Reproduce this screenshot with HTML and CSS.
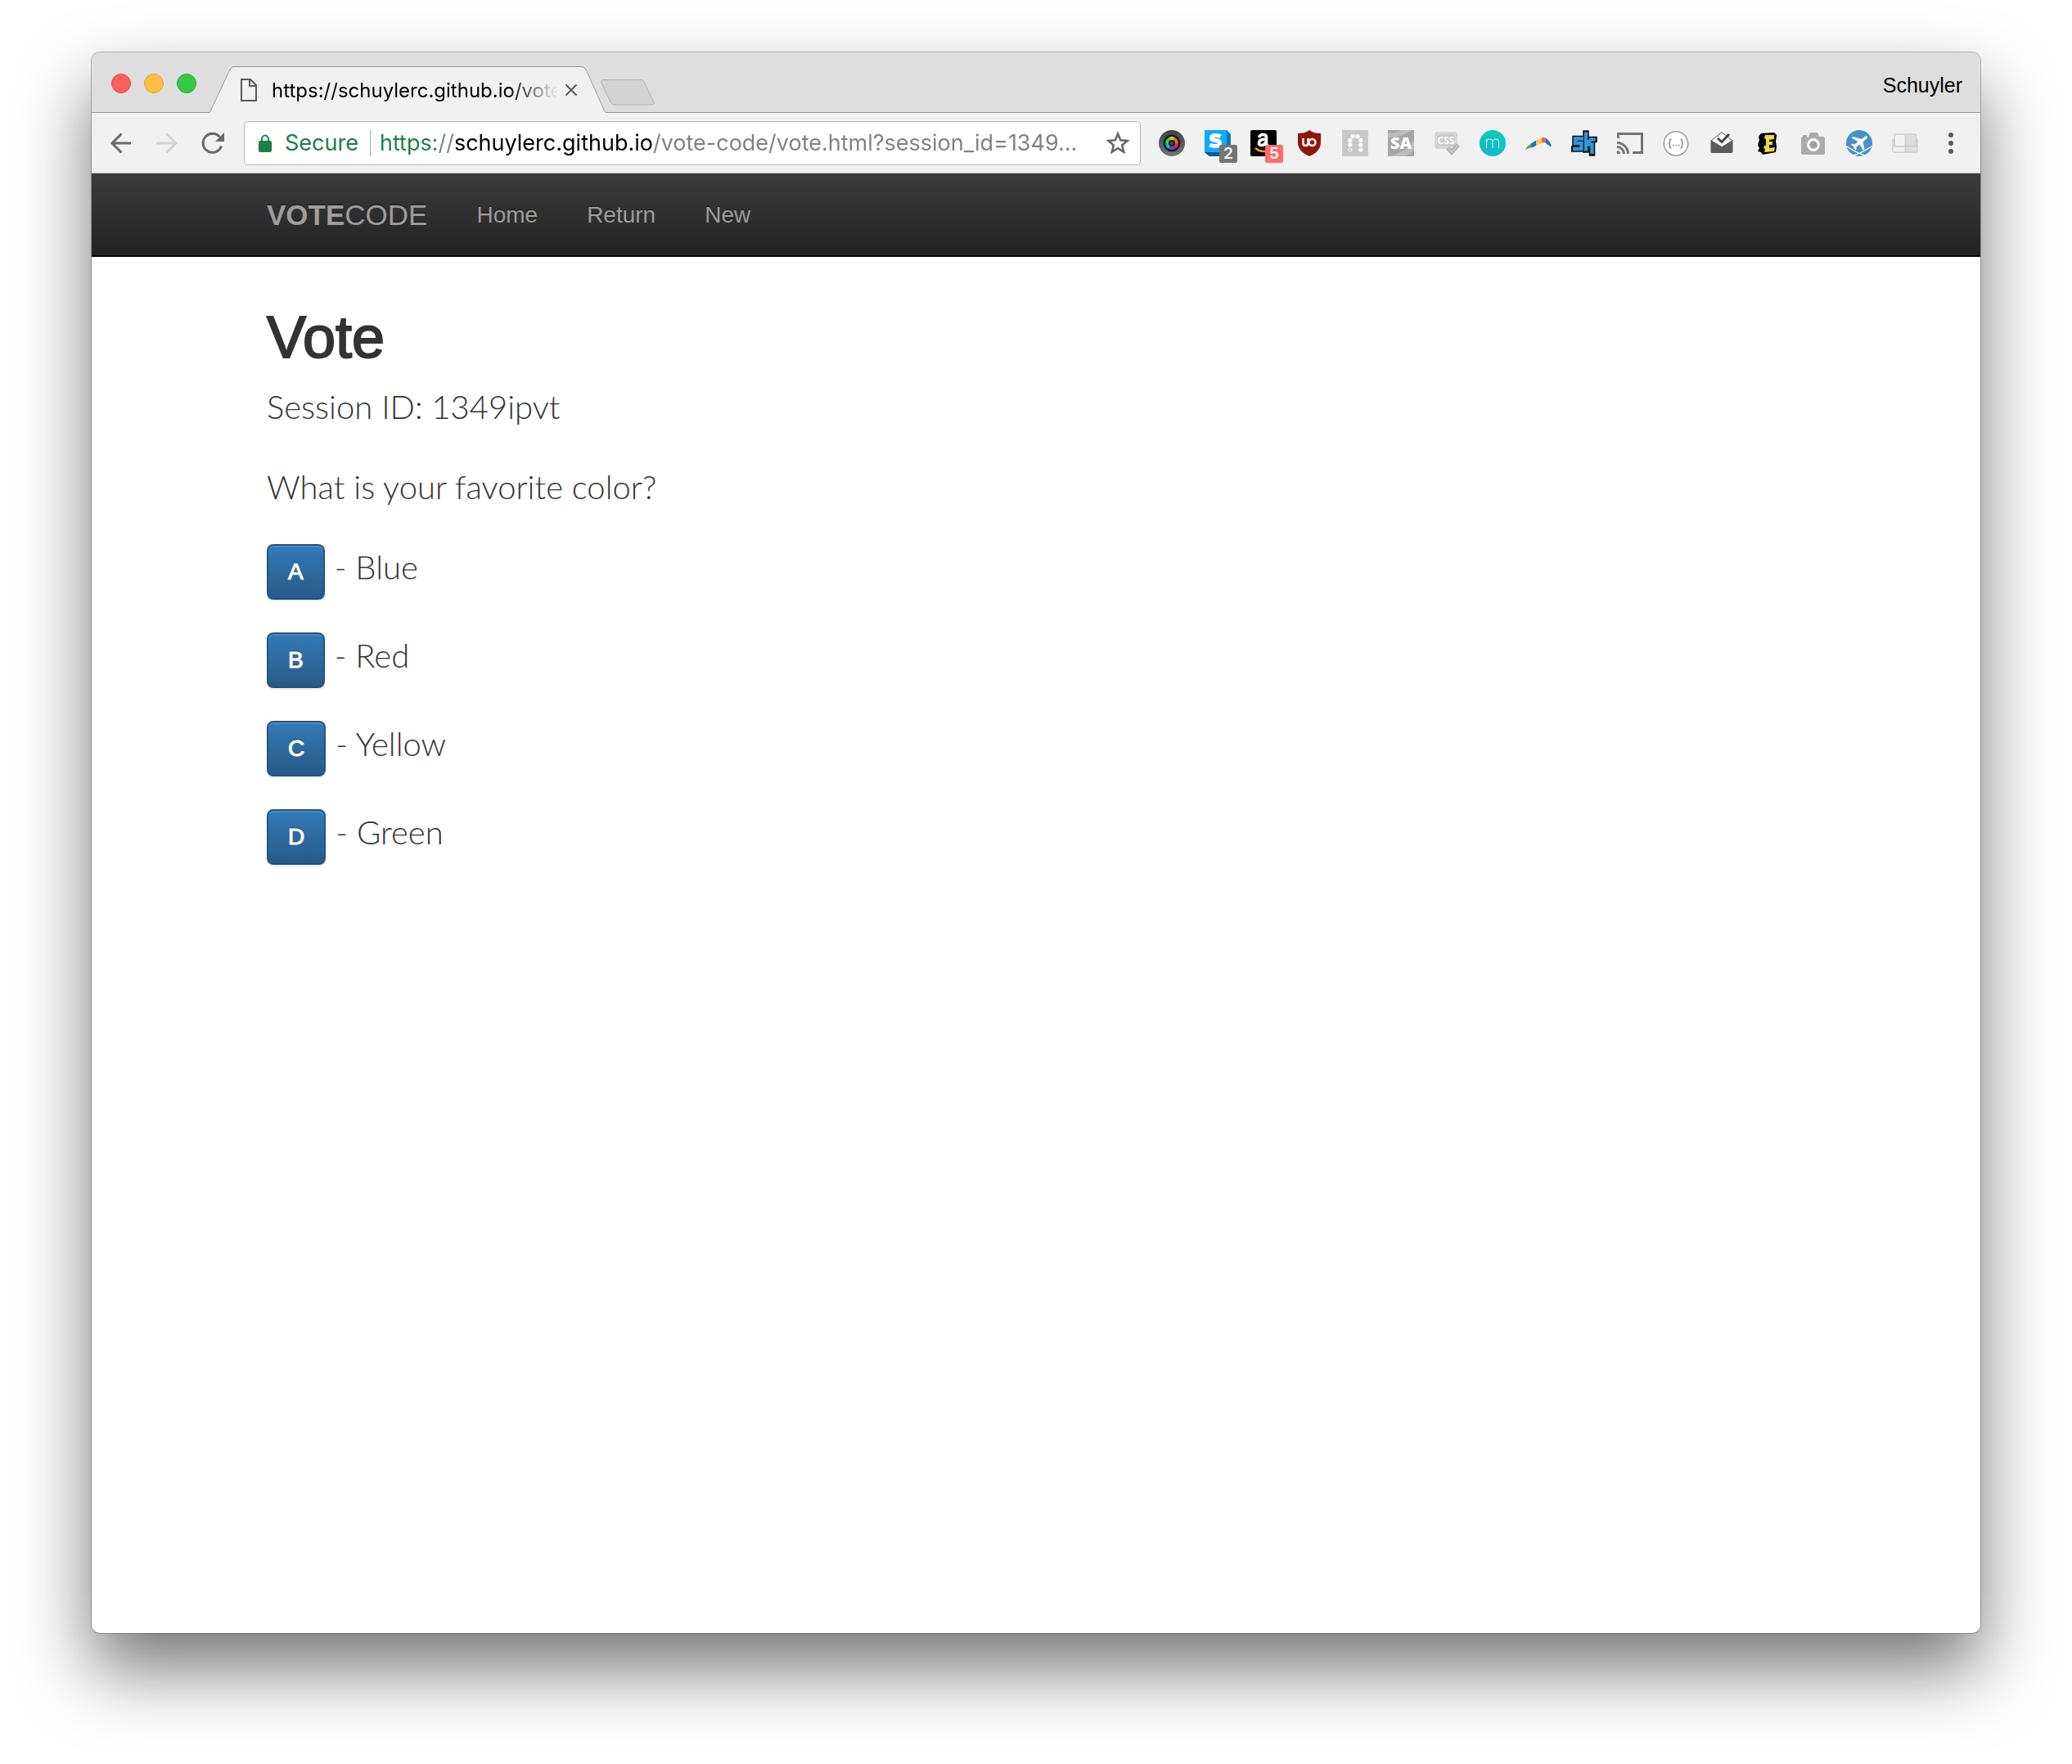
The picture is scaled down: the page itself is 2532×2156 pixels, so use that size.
FILE: index.html
```html
<!DOCTYPE html>
<html lang="en">
<head>
<meta charset="utf-8">
<title>Vote</title>
<link rel="stylesheet" href="styles.css">
</head>
<body>
<div class="window">
  <header class="tabstrip">
    <div class="lights">
      <button class="light light-close" aria-label="Close window"></button>
      <button class="light light-min" aria-label="Minimize window"></button>
      <button class="light light-max" aria-label="Zoom window"></button>
    </div>
    <div class="tab">
      <svg class="tab-shape" viewBox="0 0 484 57" aria-hidden="true"><path d="M0 56 Q1 56 2 53 L25 4 Q27 .5 30 .5 H455 Q458 .5 460 4 L482 53 Q483 56 484 56 V57 H0 Z" fill="#f1f1f1"/><path d="M0 56 Q1 56 2 53 L25 4 Q27 .5 30 .5 H455 Q458 .5 460 4 L482 53 Q483 56 484 56" fill="none" stroke="#999"/></svg>
      <svg class="tab-page" viewBox="0 0 20 28" aria-hidden="true"><path d="M1 1 H12 L19 8 V27 H1 Z M11 1 V9 H19" fill="none" stroke="#5a5a5a" stroke-width="2"/></svg>
      <span class="tab-title">https://schuylerc.github.io/vote</span>
      <button class="tab-close" aria-label="Close tab"><svg viewBox="0 0 16 16"><path d="M1.500 1.500 L14.500 14.500 M14.500 1.500 L1.500 14.500" stroke="#5a5a5a" stroke-width="2"/></svg></button>
    </div>
    <button class="new-tab" aria-label="New tab"><svg viewBox="0 0 66 32"><path d="M4 .5 H49 Q52 .5 53 3 L65 28 Q66 31 63 31 H18 Q14 31 12 28 L1 4 Q0 .5 4 .5 Z" fill="#d3d3d3" stroke="#b0b0b0"/></svg></button>
    <span class="profile">Schuyler</span>
  </header>

  <div class="toolbar">
    <div class="tools">
      <button class="tool" aria-label="Back"><svg viewBox="0 0 32 32"><path d="M28 16 H5 M16.500 4.500 L5 16 L16.500 27.500" fill="none" stroke="#686868" stroke-width="3"/></svg></button>
      <button class="tool" aria-label="Forward"><svg viewBox="0 0 32 32"><path d="M3 16 H27 M15.500 4.500 L27 16 L15.500 27.500" fill="none" stroke="#d3d3d3" stroke-width="3"/></svg></button>
      <button class="tool" aria-label="Reload"><svg viewBox="0 0 32 32"><path d="M26.500 19.500 A11.500 11.500 0 1 1 24.500 8.500" fill="none" stroke="#686868" stroke-width="3"/><path d="M30 3 V14 H19 Z" fill="#686868"/></svg></button>
    </div>
    <div class="omnibox">
      <svg class="lock" viewBox="0 0 16 22" aria-hidden="true"><path d="M4 9 V6 A4 4.500 0 0 1 12 6 V9" fill="none" stroke="#188048" stroke-width="2"/><rect y="8" width="16" height="14" rx="2" fill="#188048"/></svg>
      <label class="secure" for="url">Secure</label>
      <input class="url" id="url" type="text" value="https://schuylerc.github.io/vote-code/vote.html?session_id=1349...">
      <button class="star" aria-label="Bookmark this page"><svg viewBox="0 0 30 30"><path d="M15 3.500 L18.200 11.300 L26.600 12 L20.200 17.400 L22.200 25.700 L15 21.200 L7.800 25.700 L9.800 17.400 L3.400 12 L11.800 11.300 Z" fill="none" stroke="#686868" stroke-width="2.600"/></svg></button>
    </div>
    <div class="tools">
      <button class="tool" aria-label="Color lens"><svg viewBox="0 0 32 32"><defs><linearGradient id="rim" x2="0" y2="1"><stop stop-color="#3f4246"/><stop offset="1" stop-color="#70757b"/></linearGradient></defs><circle cx="16" cy="16" r="16" fill="url(#rim)"/><circle cx="16" cy="16" r="10.500" fill="#1b1c1e"/><g fill="none" stroke-width="4.500"><path d="M10.500 16 A5.500 5.500 0 0 1 13.200 11.200" stroke="#35d43b"/><path d="M13.200 11.200 A5.500 5.500 0 0 1 18.800 11.200" stroke="#b9cf35"/><path d="M18.800 11.200 A5.500 5.500 0 0 1 21.500 16" stroke="#ee6a24"/><path d="M21.500 16 A5.500 5.500 0 0 1 18.800 20.800" stroke="#e8207c"/><path d="M18.800 20.800 A5.500 5.500 0 0 1 13.200 20.800" stroke="#5d45d8"/><path d="M13.200 20.800 A5.500 5.500 0 0 1 10.500 16" stroke="#18b9cc"/></g><circle cx="16" cy="16" r="4" fill="#2a2022"/><circle cx="16" cy="16" r="1.500" fill="#5b5558"/></svg></button>
      <button class="tool" aria-label="Similar sites"><svg viewBox="0 0 32 32"><path d="M27 0 L32 5 V32 H6 L0 27 Z" fill="#0879b5"/><path d="M0 27 H27 V32 H6 Z" fill="#075b8c"/><path d="M0 0 H27 V27 H0 Z" fill="#10a9ff"/><path d="M19.500 8 Q17 6.500 13.500 6.500 Q8.500 6.500 8.500 9.500 Q8.500 12 13 12.500 Q18.500 13 18.500 16 Q18.500 19.500 13 19.500 Q9.500 19.500 6.500 18" fill="none" stroke="#fff" stroke-width="5"/></svg><span class="badge">2</span></button>
      <button class="tool" aria-label="Shopping assistant"><svg viewBox="0 0 32 32"><rect width="32" height="32" rx="2"/><path d="M10.500 9 Q11.500 5.500 15.500 5.500 Q19.500 5.500 19.500 9 V16 Q19.500 18 21.500 19.500 M19.500 11 Q10.500 11 10.500 15.500 Q10.500 18.500 13.500 18.500 Q18 18.500 19 14" fill="none" stroke="#fff" stroke-width="3.600"/><path d="M6 22 Q13 28 22 25" fill="none" stroke="#f79b1e" stroke-width="2.500"/></svg><span class="badge badge-red">5</span></button>
      <button class="tool" aria-label="Content blocker"><svg viewBox="0 0 32 32"><path d="M16 0 C20 3 25 4 30 4 V15 C30 24 23 29 16 32 C9 29 2 24 2 15 V4 C7 4 12 3 16 0 Z" fill="#92150d"/><path d="M8.500 10 V16 Q8.500 19 11.500 19 Q14.500 19 14.500 16 V10" fill="none" stroke="#fff" stroke-width="2.500"/><circle cx="19.500" cy="15" r="4" fill="none" stroke="#fff" stroke-width="2.500"/></svg></button>
      <button class="tool" aria-label="Dots"><svg viewBox="0 0 32 32"><rect width="32" height="32" fill="#c8c8c8"/><g fill="#fff"><circle cx="13" cy="7.500" r="2.600"/><circle cx="19" cy="7.500" r="2.600"/><circle cx="9.800" cy="12.500" r="2.600"/><circle cx="22.800" cy="12.500" r="2.600"/><circle cx="9.800" cy="18" r="2.600"/><circle cx="22.800" cy="18" r="2.600"/><circle cx="22.800" cy="24" r="2.600"/></g><circle cx="9.800" cy="24" r="2" fill="none" stroke="#fff"/></svg></button>
      <button class="tool" aria-label="SA"><svg viewBox="0 0 32 32"><rect width="32" height="32" fill="#a6a6a6"/><path d="M0 9 Q16 9 30 0 H16 Q8 4 0 4 Z M0 32 Q22 28 32 12 V24 L22 32 Z" fill="#bbb"/><text x="16" y="23" class="glyph heavy" font-size="20" fill="#fff">SA</text></svg></button>
      <button class="tool" aria-label="CSS check"><svg viewBox="0 0 32 32"><rect x="2" y="3" width="26" height="19" rx="2" fill="#ccc" stroke="#bdbdbd"/><rect x="3" y="4" width="24" height="17" rx="1" fill="none" stroke="#e6e6e6"/><text x="15" y="17" class="glyph bold" font-size="12" fill="#fff">CSS</text><path d="M17 22 L22 27 L30 18" fill="none" stroke="#aaa" stroke-width="5"/><path d="M17 22 L22 27 L30 18" fill="none" stroke="#c6c6c6" stroke-width="2.500"/></svg></button>
      <button class="tool" aria-label="Momentum"><svg viewBox="0 0 32 32"><defs><linearGradient id="mint" x1=".8" y1="0" x2=".2" y2="1"><stop stop-color="#0bcdb0"/><stop offset="1" stop-color="#12b7d3"/></linearGradient></defs><circle cx="16" cy="16" r="16" fill="url(#mint)"/><path d="M8.500 22 V11 M8.500 15 Q8.500 11 12 11 Q16 11 16 15 V22 M16 15 Q16 11 20 11 Q23.500 11 23.500 15 V22" fill="none" stroke="#c9f5ef" stroke-width="1.200"/></svg></button>
      <button class="tool" aria-label="Boomerang"><svg viewBox="0 0 32 32"><path d="M0 24 Q2 19 8 16 L9 21 Q4 22 0 24 Z" fill="#4fa86a"/><path d="M7 16.500 L13 12.500 L13 19 L8 21.500 Z" fill="#1573ab"/><path d="M13 12.500 L20 9.500 L20 15.500 L13 19 Z" fill="#fdc65c"/><path d="M20 9.500 Q23 8.500 25 10 L26 16 Q23 15 20 15.500 Z" fill="#e9674f"/><path d="M25 10 Q30 13 32 20 Q29 20 25 15.500 Z" fill="#1573ab"/></svg></button>
      <button class="tool" aria-label="SK"><svg viewBox="0 0 32 32"><g fill="none"><path id="sk" d="M14 10.500 H5 V16 H12.500 V23 H3 M18 4 V24 M28 11.500 H23.500 L20 16 M20 17 H25.500 V28" stroke="#111" stroke-width="7.500" stroke-linecap="square"/><path d="M15 10.500 H5 V16 H12.500 V23 H2 M18 2.500 V25.500 M29.500 11.500 H24 L20 16 M19 17.500 H25.500 V29" stroke="#3295d9" stroke-width="4.400"/></g></svg></button>
      <button class="tool" aria-label="Cast"><svg viewBox="0 0 32 32"><g fill="none" stroke="#747474" stroke-width="3"><path d="M1.500 10 V4.500 H30.500 V27.500 H19"/><path d="M0 15.500 A13.500 13.500 0 0 1 13.500 29"/><path d="M0 20.500 A8.500 8.500 0 0 1 8.500 29"/></g><path d="M0 25 A4 4 0 0 1 4 29 H0 Z" fill="#747474"/></svg></button>
      <button class="tool" aria-label="JSON viewer"><svg viewBox="0 0 32 32"><circle cx="16" cy="16.500" r="14.700" fill="#fff" stroke="#a0a0a0" stroke-width="1.500"/><path d="M10.500 11 Q8.500 11 8.500 13 V15 Q8.500 16.500 7 16.500 Q8.500 16.500 8.500 18 V20 Q8.500 22 10.500 22 M21.500 11 Q23.500 11 23.500 13 V15 Q23.500 16.500 25 16.500 Q23.500 16.500 23.500 18 V20 Q23.500 22 21.500 22" fill="none" stroke="#888" stroke-width="1.500"/><path d="M12 18.500 h1.500 m2 0 h1.500 m2 0 h1.500" stroke="#888" stroke-width="1.500"/></svg></button>
      <button class="tool" aria-label="Save to inbox"><svg viewBox="0 0 32 32"><path d="M3 13 L16 2.500 L29 13 L16 21 Z" fill="#f8f8f8" stroke="#555"/><path d="M2.500 12 L16 20.500 L29.500 12 V26 Q29.500 28 27.500 28 H4.500 Q2.500 28 2.500 26 Z" fill="#5b5b5b"/><path d="M11 10 L16 14.500 L25 5" fill="none" stroke="#444" stroke-width="2.800"/></svg></button>
      <button class="tool" aria-label="E reader"><svg viewBox="0 0 32 32"><path d="M8 4 L24 3 L27 6 L26 14 L27 20 L26 27 L10 30 L8 27 L4 26 L6 22 L4 18 L6 12 L5 8 Z"/><path d="M13 6 L24 6 L24 11 L18 12 V14 L22 14 V18 L18 18 V22 L25 21 L24 26 L12 27 L13 23 L11 22 L12 19 H14 V11 L12 10 Z" fill="#f8d648"/></svg></button>
      <button class="tool" aria-label="Screenshot"><svg viewBox="0 0 32 32"><path d="M3 8 V6 H8 V9 H10 L12 3 H21 L23 8 H28 Q30 8 30 10 V28 Q30 30 28 30 H3 Q1 30 1 28 V10 Q1 8 3 8 Z" fill="#ababab"/><circle cx="16" cy="18" r="6.500" fill="#ababab" stroke="#fff" stroke-width="2.800"/><circle cx="16" cy="18" r="3" fill="#999"/></svg></button>
      <button class="tool" aria-label="Flights"><svg viewBox="0 0 32 32"><circle cx="16" cy="16" r="16" fill="#4692c8"/><path d="M24.500 7 Q27 7 25.500 10 L20.500 14.500 L22.500 23.500 L20.500 24.500 L16.500 17.500 L12.500 20.500 L12.500 23.500 L11 24.500 L9.500 20.500 L6 18 L7.500 16.500 L10.500 17.500 L14.500 14 L6.500 9.500 L8.500 8 L18.500 11 Z" fill="#fff"/><path d="M1 20 Q13 28 23 31 M31 20 Q19 28 9 31" fill="none" stroke="#fff" stroke-width="1.500"/></svg></button>
      <button class="tool" aria-label="Sofa"><svg viewBox="0 0 32 32"><g stroke="#ccc" stroke-width="1.300"><rect x="3" y="5" width="13.500" height="15" rx="2" fill="#f3f3f3"/><rect x="16.500" y="5" width="13" height="15" rx="2" fill="#dcdcdc"/><path d="M1 12 H3 V20 H16.500 V27 H3 Q1 27 1 25 Z" fill="#f1f1f1"/><path d="M31 12 H29.500 V20 H16.500 V27 H29 Q31 27 31 25 Z" fill="#dfdfdf"/></g></svg></button>
      <button class="tool" aria-label="Menu"><svg viewBox="0 0 32 32"><g fill="#5a5a5a"><circle cx="16" cy="6" r="3"/><circle cx="16" cy="16" r="3"/><circle cx="16" cy="26" r="3"/></g></svg></button>
    </div>
  </div>

  <nav class="navbar">
    <div class="container navbar-inner">
      <a class="brand" href="#"><b>VOTE</b>CODE</a>
      <a class="nav-link" href="#">Home</a>
      <a class="nav-link" href="#">Return</a>
      <a class="nav-link" href="#">New</a>
    </div>
  </nav>

  <main class="container page">
    <h1 class="title">Vote</h1>
    <p class="lead">Session ID: 1349ipvt</p>
    <p class="lead">What is your favorite color?</p>
    <div class="option"><button class="btn" id="a">A</button><label class="answer" for="a">- Blue</label></div>
    <div class="option"><button class="btn" id="b">B</button><label class="answer" for="b">- Red</label></div>
    <div class="option"><button class="btn" id="c">C</button><label class="answer" for="c">- Yellow</label></div>
    <div class="option"><button class="btn" id="d">D</button><label class="answer" for="d">- Green</label></div>
  </main>
</div>
</body>
</html>
```
FILE: styles.css
```css
* { box-sizing: border-box; }

body {
  display: flex;
  min-height: 100vh;
  margin: 0;
  padding: 64px 112px 160px;
  background: #fff;
  color: #333;
  font-family: "Liberation Sans", Arial, sans-serif;
}

button {
  padding: 0;
  border: 0;
  background: none;
  font: inherit;
}

svg { display: block; width: 100%; height: 100%; }

.window {
  flex: 1;
  min-width: 0;
  border-radius: 10px;
  background: #fff;
  box-shadow: 0 0 0 1px rgba(0, 0, 0, .25), 0 44px 88px rgba(0, 0, 0, .54);
}

/* Tab strip */
.tabstrip {
  display: flex;
  align-items: flex-end;
  height: 74px;
  padding: 2px 22px 0 24px;
  border-bottom: 1px solid #999;
  border-radius: 10px 10px 0 0;
  background: #dedede;
}
.lights { display: flex; gap: 16px; align-self: center; margin-right: 16px; }
.light { width: 24px; height: 24px; border: 1px solid; border-radius: 50%; }
.light-close { background: #fc605c; border-color: #e04845; }
.light-min { background: #fdbf40; border-color: #dea236; }
.light-max { background: #34c84a; border-color: #27aa35; }

.tab {
  position: relative;
  display: flex;
  align-items: center;
  width: 484px;
  height: 57px;
  margin-bottom: -1px;
  padding: 0 34px 0 38px;
}
.tab-shape { position: absolute; inset: 0; }
.tab-page { position: relative; width: 20px; height: 28px; }
.tab-title {
  position: relative;
  flex: 1;
  min-width: 0;
  margin: 0 8px 0 18px;
  padding-top: 2px;
  overflow: hidden;
  color: #000;
  font: 24px/32px Inter, sans-serif;
  white-space: nowrap;
  -webkit-mask-image: linear-gradient(to left, transparent, #000 60px);
  mask-image: linear-gradient(to left, transparent, #000 60px);
}
.tab-close { position: relative; width: 16px; height: 16px; }
.new-tab { width: 66px; height: 32px; margin: 0 auto 8px -6px; }
.profile { align-self: center; padding-top: 4px; color: #000; font-size: 25px; line-height: 32px; }

/* Toolbar */
.toolbar {
  display: flex;
  align-items: center;
  gap: 22px;
  height: 74px;
  padding: 0 20px;
  border-bottom: 1px solid #c4c4c4;
  background: #f1f1f1;
}
.tools { display: flex; gap: 24px; }
.tool { position: relative; width: 32px; height: 32px; }
.glyph { font-family: "Open Sans", sans-serif; text-anchor: middle; }
.bold { font-weight: 700; }
.heavy { font-weight: 800; }
.badge {
  position: absolute;
  top: 18px;
  left: 18px;
  width: 22px;
  height: 22px;
  border-radius: 2px;
  background: #757575;
  color: #fff;
  font: 600 19px/22px Inter, sans-serif;
  text-align: center;
}
.badge-red { background: #ff6b68; }

.omnibox {
  display: flex;
  flex: 1;
  align-items: center;
  min-width: 0;
  height: 54px;
  padding: 0 12px 0 17px;
  border: 1px solid #b5b5b5;
  border-radius: 5px;
  background: #fff;
}
.lock { width: 16px; height: 22px; margin-right: 16px; }
.secure {
  padding-right: 14px;
  border-right: 1px solid #aaa;
  color: #188048;
  font: 27px/32px Inter, sans-serif;
}
.url {
  flex: 1;
  min-width: 0;
  height: 40px;
  margin: 0 12px 0 11px;
  padding: 0;
  border: 0;
  outline: 0;
  background: linear-gradient(to right, #188048 68px, #808080 68px 93px, #000 93px 333px, #808080 333px);
  -webkit-background-clip: text;
  background-clip: text;
  color: #808080;
  -webkit-text-fill-color: transparent;
  font: 27px/40px Inter, sans-serif;
}
.star { width: 30px; height: 30px; }

/* Site navigation */
.container {
  width: 100%;
  max-width: 1940px;
  margin: 0 auto;
  padding: 0 30px;
}
.navbar {
  border-bottom: 2px solid #080808;
  background: linear-gradient(#3c3c3c, #222);
  text-shadow: 0 -2px 0 rgba(0, 0, 0, .25);
}
.navbar-inner { display: flex; align-items: center; height: 100px; padding-top: 2px; }
.brand, .nav-link { color: #9d9d9d; line-height: 40px; text-decoration: none; }
.brand { margin-right: 30px; font-size: 35px; }
.nav-link { padding: 0 30px; font-size: 28px; }

/* Voting page */
.page { padding-top: 58px; }
.title {
  margin: 0 0 16px;
  font-size: 72px;
  font-weight: 400;
  line-height: 80px;
  -webkit-text-stroke: 2px #333;
}
.lead, .answer {
  font-family: Lato, sans-serif;
  font-size: 40px;
  font-weight: 300;
  line-height: 58px;
}
.lead { margin: 0 0 40px; }
.option { display: flex; align-items: baseline; gap: 12px; height: 68px; margin-bottom: 40px; }
.btn {
  height: 68px;
  padding: 0 24px;
  border: 2px solid #245580;
  border-radius: 8px;
  background: linear-gradient(#337ab7, #265a88);
  box-shadow: inset 0 2px 0 rgba(255, 255, 255, .15), 0 2px 2px rgba(0, 0, 0, .075);
  color: #fff;
  font-size: 28px;
  line-height: 40px;
  text-shadow: 0 -2px 0 rgba(0, 0, 0, .2);
  -webkit-text-stroke: 1px #fff;
}
```
